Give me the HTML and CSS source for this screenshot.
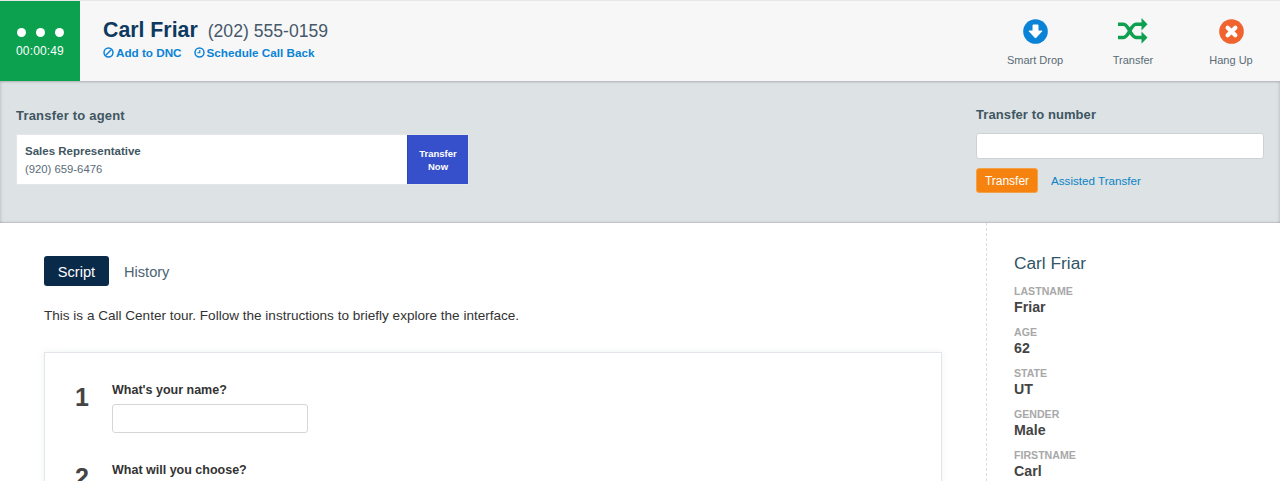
FILE: index.html
```html
<!DOCTYPE html>
<html lang="en">
<head>
<meta charset="utf-8">
<title>Call Center</title>
<link rel="stylesheet" href="styles.css">
</head>
<body>
<header class="callbar">
  <div class="status">
    <div class="dots"><span></span><span></span><span></span></div>
    <div class="timer">00:00:49</div>
  </div>
  <div class="contact">
    <div class="contact-top"><span class="contact-name">Carl Friar</span><span class="contact-phone">(202) 555-0159</span></div>
    <div class="contact-links">
      <a class="contact-link"><svg class="link-icon" viewBox="0 0 12 12"><circle cx="6" cy="6" r="4.900" fill="none" stroke="currentColor" stroke-width="1.600"/><path d="M2.800 9.200 9.200 2.800" stroke="currentColor" stroke-width="1.500"/></svg>Add to DNC</a>
      <a class="contact-link"><svg class="link-icon" viewBox="0 0 12 12"><circle cx="6" cy="6" r="4.900" fill="none" stroke="currentColor" stroke-width="1.600"/><path d="M6.300 3.200V6.300H3.600" fill="none" stroke="currentColor" stroke-width="1.300"/></svg>Schedule Call Back</a>
    </div>
  </div>
  <div class="actions">
    <div class="action">
      <svg class="action-icon" viewBox="0 0 26 26"><circle cx="13" cy="13" r="12.800" fill="#0a83d6"/><path d="M10.400 6.200h5.200v6.300h4.200L13 19.800 6.200 12.500h4.200z" fill="#fff" stroke="#fff" stroke-width="1" stroke-linejoin="round"/></svg>
      <span>Smart Drop</span>
    </div>
    <div class="action">
      <svg class="action-icon action-icon-wide" viewBox="0 0 30 26"><g fill="none" stroke="#0ea04f" stroke-width="3.400"><path d="M0 6.300h5.500c5.500 0 7 13.200 12.500 13.200H24"/><path d="M0 19.500h5.500c5.500 0 7-13.200 12.500-13.200H24"/></g><path d="M23.500 0l6 6.300-6 6.100zM23.500 13.400l6 6.100-6 6.300z" fill="#0ea04f"/></svg>
      <span>Transfer</span>
    </div>
    <div class="action">
      <svg class="action-icon" viewBox="0 0 26 26"><circle cx="13" cy="13" r="12.800" fill="#f0632f"/><path d="M9 9l8 8M17 9l-8 8" stroke="#fff" stroke-width="4.400" stroke-linecap="round"/></svg>
      <span>Hang Up</span>
    </div>
  </div>
</header>

<section class="transfer-panel">
  <div class="agent-col">
    <h2 class="panel-title">Transfer to agent</h2>
    <div class="agent-card">
      <div class="agent-info">
        <div class="agent-role">Sales Representative</div>
        <div class="agent-phone">(920) 659-6476</div>
      </div>
      <button class="transfer-now">Transfer<br>Now</button>
    </div>
  </div>
  <div class="number-col">
    <h2 class="panel-title panel-title-tight">Transfer to number</h2>
    <input class="number-input" type="text" aria-label="Transfer to number">
    <div class="number-actions">
      <button class="btn-orange">Transfer</button>
      <a class="assisted">Assisted Transfer</a>
    </div>
  </div>
</section>

<div class="content">
  <main class="script-col">
    <nav class="tabs">
      <span class="tab tab-active">Script</span>
      <span class="tab tab-plain">History</span>
    </nav>
    <p class="intro">This is a Call Center tour. Follow the instructions to briefly explore the interface.</p>
    <div class="script-card">
      <div class="question">
        <div class="q-num">1</div>
        <div class="q-body">
          <label class="q-label">What's your name?</label>
          <input class="q-input" type="text" aria-label="What's your name?">
        </div>
      </div>
      <div class="question">
        <div class="q-num">2</div>
        <div class="q-body">
          <label class="q-label">What will you choose?</label>
        </div>
      </div>
    </div>
  </main>
  <aside class="side-col">
    <h3 class="side-name">Carl Friar</h3>
    <dl class="fields">
      <div class="field"><dt>LASTNAME</dt><dd>Friar</dd></div>
      <div class="field"><dt>AGE</dt><dd>62</dd></div>
      <div class="field"><dt>STATE</dt><dd>UT</dd></div>
      <div class="field"><dt>GENDER</dt><dd>Male</dd></div>
      <div class="field"><dt>FIRSTNAME</dt><dd>Carl</dd></div>
    </dl>
  </aside>
</div>
</body>
</html>
```
FILE: styles.css
```css
* { box-sizing: border-box; }
html, body { margin: 0; padding: 0; height: 481px; overflow: hidden; background: #fff; }
body { font-family: "Liberation Sans", Arial, sans-serif; color: #333; }

.callbar {
  position: relative;
  z-index: 2;
  display: flex;
  height: 81px;
  background: #f7f7f7;
  border-top: 1px solid #e8e8e8;
  box-shadow: 0 1px 2px rgba(0,0,0,.22);
}
.status {
  width: 80px;
  height: 80px;
  background: #0ba14f;
  color: #fff;
  display: flex;
  flex-direction: column;
  align-items: center;
  padding-top: 27px;
}
.dots { display: flex; gap: 10px; }
.dots span { width: 9px; height: 9px; border-radius: 50%; background: #fff; }
.timer { font-size: 12px; line-height: 14px; margin-top: 7px; letter-spacing: .15px; }

.contact { margin-left: 23px; padding-top: 16px; }
.contact-top { display: flex; align-items: baseline; gap: 10px; }
.contact-name { font-size: 21.300px; line-height: 26px; font-weight: 700; color: #0f3a5f; }
.contact-phone { font-size: 17.600px; color: #46586a; }
.contact-links { display: flex; gap: 12px; margin-top: 2px; }
.contact-link { display: flex; align-items: center; gap: 2px; font-size: 11.700px; line-height: 15px; font-weight: 700; color: #0a83d6; }
.link-icon { width: 11px; height: 11px; }

.actions { margin-left: auto; display: flex; }
.action { display: flex; flex-direction: column; align-items: center; width: 98px; padding-top: 18px; font-size: 11px; color: #5a6b76; }
.action span { margin-top: 8px; line-height: 15px; white-space: nowrap; }
.action-icon { width: 25px; height: 25px; display: block; margin-bottom: 1px; }
.action-icon-wide { width: 30px; height: 26px; margin: -1px 0 1px; }

.transfer-panel {
  display: flex;
  justify-content: space-between;
  height: 142px;
  background: #dde2e5;
  box-shadow: inset 3px 0 3px -2px rgba(0,0,0,.12), inset -3px 0 3px -2px rgba(0,0,0,.12), inset 0 -2px 2px -1px rgba(0,0,0,.16);
  padding: 0 16px;
}
.panel-title { margin: 0; font-size: 13px; line-height: 16px; font-weight: 700; color: #3f5662; letter-spacing: .2px; }
.panel-title-tight { letter-spacing: .09px; }
.agent-col { padding-top: 27px; }
.agent-card { display: flex; width: 453px; height: 51px; margin-top: 10px; background: #fff; border: 1px solid #e4e7ea; }
.agent-info { flex: 1; padding: 8px 8px; }
.agent-role { font-size: 11.500px; line-height: 16px; font-weight: 700; color: #3f5662; }
.agent-phone { font-size: 11.300px; line-height: 16px; margin-top: 2px; color: #5a6b76; }
.transfer-now { width: 61px; border: 0; border-left: 1px solid #2c47b8; background: #3650cb; color: #fff; font: 700 9.500px/13.500px "Liberation Sans", Arial, sans-serif; padding: 1px 0 0; }

.number-col { width: 288px; padding-top: 26px; }
.number-input { display: block; width: 288px; height: 26px; margin-top: 10px; background: #fff; border: 1px solid #ced3d8; border-radius: 3px; padding: 0; }
.number-actions { display: flex; align-items: center; margin-top: 9px; gap: 13px; }
.btn-orange { width: 62px; height: 25px; border: 1px solid #f4a24a; border-radius: 3px; background: #f6830f; color: #fff; font: 12px "Liberation Sans", Arial, sans-serif; padding: 0; }
.assisted { font-size: 11.650px; color: #0a83c6; }

.content { display: flex; height: 258px; }
.script-col { width: 986px; padding: 33px 44px 0; }
.tabs { display: flex; align-items: center; gap: 15px; }
.tab { font-size: 14.600px; line-height: 18px; color: #4b6472; }
.tab-plain { padding-top: 2px; }
.tab-active { width: 65px; height: 30px; line-height: 32px; text-align: center; background: #0a2a4a; border-radius: 3px; color: #fff; }
.intro { margin: 21px 0 0; font-size: 13.550px; line-height: 18px; color: #333; }
.script-card { width: 898px; height: 200px; margin-top: 27px; padding: 29px 29px; border: 1px solid #e2e6ea; box-shadow: 0 0 6px rgba(210,216,222,.35); }
.question { display: flex; height: 80px; }
.q-num { width: 38px; padding-left: 1px; font-size: 25px; line-height: 30px; font-weight: 700; color: #444; }
.q-label { display: block; font-size: 12.500px; line-height: 16px; font-weight: 700; color: #333; }
.q-input { display: block; width: 196px; height: 29px; margin-top: 6px; border: 1px solid #d4d7da; border-radius: 3px; background: #fff; padding: 0; }

.side-col { flex: 1; border-left: 1px dashed #dcdcdc; padding: 28px 0 0 27px; }
.side-name { margin: 0; font-size: 17.300px; line-height: 24px; font-weight: 400; color: #2f5566; }
.fields { margin: 10px 0 0; }
.field { height: 41px; }
.field dt { font-size: 10.600px; line-height: 13px; color: #a8a8a8; font-weight: 700; }
.field dd { margin: 0; font-size: 14.200px; line-height: 18px; font-weight: 700; color: #444; }
```
